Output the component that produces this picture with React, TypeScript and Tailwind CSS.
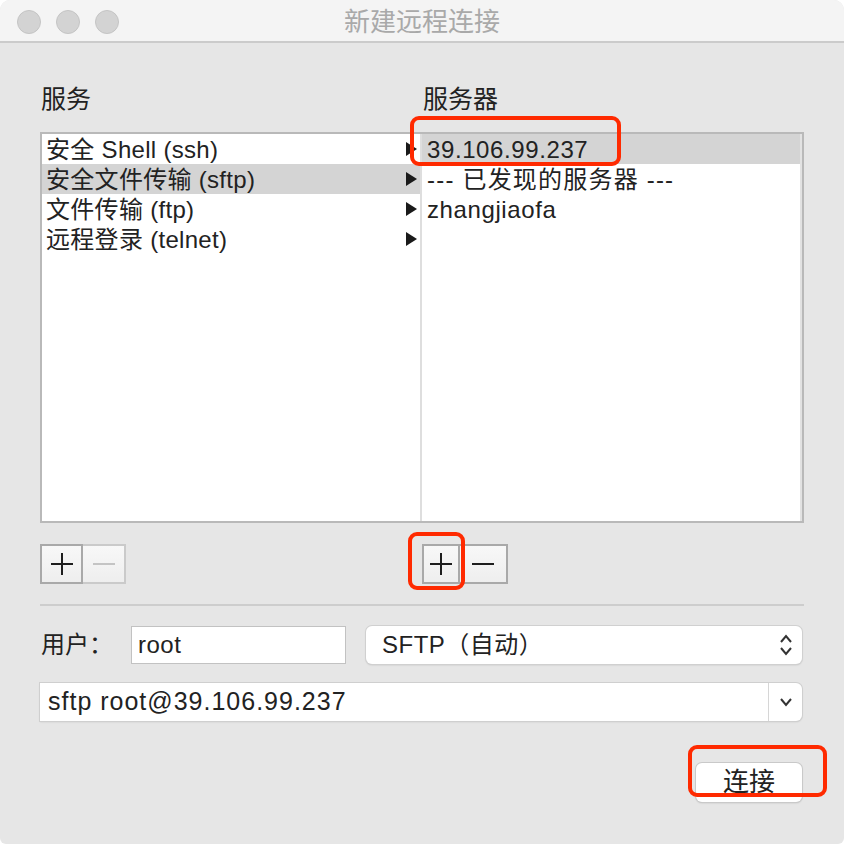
import { ReactNode } from "react";

const SERVICES = ["安全 Shell (ssh)", "安全文件传输 (sftp)", "文件传输 (ftp)", "远程登录 (telnet)"];
const SERVERS = ["39.106.99.237", "--- 已发现的服务器 ---", "zhangjiaofa"];

const font = { fontFamily: '"Liberation Sans", "Noto Sans CJK SC", sans-serif' };

const Plus = ({ color = "#1e1e1e" }: { color?: string }) => (
  <svg width="22" height="22" viewBox="0 0 22 22">
    <path d="M11 0V22M0 11H22" stroke={color} strokeWidth="2" />
  </svg>
);

const Minus = ({ color = "#1e1e1e" }: { color?: string }) => (
  <svg width="22" height="22" viewBox="0 0 22 22">
    <path d="M0 11H22" stroke={color} strokeWidth="2" />
  </svg>
);

const SqButton = ({ children, className }: { children: ReactNode; className: string }) => (
  <div
    className={`h-[40px] flex items-center justify-center border-2 bg-gradient-to-b from-[#f8f8f8] to-[#eeeeee] ${className}`}
  >
    {children}
  </div>
);

const Arrow = () => (
  <svg width="11" height="14" viewBox="0 0 11 14" className="shrink-0">
    <path d="M0 0L11 7L0 14Z" fill="#1a1a1a" />
  </svg>
);

export default function App() {
  return (
    <div className="w-[844px] h-[844px] bg-white text-[#222]" style={font}>
      <div className="relative h-full flex flex-col rounded-t-[10px] rounded-b-[6px] overflow-hidden bg-[#e6e6e6]">
        {/* title bar */}
        <div className="relative h-[43px] shrink-0 flex items-center bg-[#f4f4f4] border-b-2 border-[#cbcbcb]">
          <div className="flex gap-[15px] pl-[17px] pt-[2px]">
            {[0, 1, 2].map((i) => (
              <div key={i} className="w-[24px] h-[24px] rounded-full bg-[#d3d3d3] border border-[#c4c4c4]" />
            ))}
          </div>
          <div className="absolute inset-0 flex items-center justify-center pt-[3px] text-[26px] text-[#a9a9a9]">
            新建远程连接
          </div>
        </div>

        <div className="flex flex-col px-[40px] pt-[41px]">
          {/* labels */}
          <div className="flex h-[32px] items-center text-[25px]">
            <div className="w-[382px] pl-[1px]">服务</div>
            <div className="pl-[1px]">服务器</div>
          </div>

          {/* lists */}
          <div className="mt-[16px] h-[391px] flex border-2 border-[#b9b9b9] bg-white text-[24px]">
            <div className="w-[378px] flex flex-col">
              {SERVICES.map((s, i) => (
                <div
                  key={s}
                  className={`h-[30px] flex items-center justify-between pl-[4px] pr-[3px] ${i === 1 ? "bg-[#d4d4d4]" : ""}`}
                >
                  <span className="leading-[30px] tracking-[0.3px] pt-[1px]">{s}</span>
                  <Arrow />
                </div>
              ))}
            </div>
            <div className="w-[2px] bg-[#dedede]" />
            <div className="flex-1 flex flex-col">
              {SERVERS.map((s, i) => (
                <div key={s} className={`h-[30px] flex items-center pl-[5px] ${i === 0 ? "bg-[#d4d4d4]" : ""}`}>
                  <span className={`leading-[30px] pt-[1px] ${i === 1 ? "tracking-[1.2px]" : "tracking-[0.6px]"}`}>{s}</span>
                </div>
              ))}
            </div>
            <div className="w-[2px] bg-[#e2e2e2]" />
          </div>

          {/* +/- buttons */}
          <div className="mt-[21px] flex">
            <div className="w-[382px] flex">
              <SqButton className="w-[43px] border-[#a9a9a9]">
                <Plus />
              </SqButton>
              <SqButton className="w-[43px] border-[#cacaca] border-l-0">
                <Minus color="#c4c4c4" />
              </SqButton>
            </div>
            <div className="flex">
              <SqButton className="w-[38px] border-[#a9a9a9]">
                <Plus />
              </SqButton>
              <SqButton className="w-[48px] border-[#a9a9a9] border-l-0">
                <Minus />
              </SqButton>
            </div>
          </div>

          <div className="mt-[20px] h-[2px] bg-[#cdcdcd]" />

          {/* user row */}
          <div className="mt-[20px] flex items-center h-[38px] text-[24px]">
            <div className="w-[91px] pl-[1px]">用户：</div>
            <div className="w-[215px] h-[38px] flex items-center bg-white border border-[#c2c2c2] pl-[6px] tracking-[0.5px]">
              root
            </div>
            <div className="ml-[20px] flex-1 mr-[2px] h-[38px] flex items-center justify-between bg-white rounded-[6px] shadow-[0_0_0_1px_#d0d0d0,0_1px_2px_rgba(0,0,0,0.2)] pl-[16px] pr-[9px]">
              <span className="tracking-[0.5px]">SFTP（自动）</span>
              <svg width="14" height="26" viewBox="0 0 14 26">
                <path d="M2 10L7 4L12 10M2 16L7 22L12 16" stroke="#333" strokeWidth="2" fill="none" />
              </svg>
            </div>
          </div>

          {/* command combo */}
          <div className="mt-[19px] mr-[2px] h-[38px] flex bg-white rounded-r-[6px] shadow-[0_0_0_1px_#cfcfcf,0_1px_2px_rgba(0,0,0,0.15)] text-[25px]">
            <div className="flex-1 flex items-center pl-[8px] tracking-[1px]">sftp root@39.106.99.237</div>
            <div className="w-[34px] border-l border-[#d6d6d6] flex items-center justify-center">
              <svg width="14" height="12" viewBox="0 0 14 12">
                <path d="M2 3L7 9L12 3" stroke="#333" strokeWidth="2" fill="none" />
              </svg>
            </div>
          </div>

          {/* connect */}
          <div className="mt-[42px] mr-[2px] flex justify-end">
            <div className="w-[106px] h-[39px] flex items-center justify-center bg-white rounded-[6px] shadow-[0_0_0_1px_#c9c9c9,0_1px_2px_rgba(0,0,0,0.2)] text-[26px]">
              连接
            </div>
          </div>
        </div>

        {/* red annotations */}
        <div className="absolute left-[410px] top-[116px] w-[211px] h-[50px] rounded-[9px] border-4 border-[#ff2a00]" />
        <div className="absolute left-[408px] top-[532px] w-[57px] h-[58px] rounded-[9px] border-4 border-[#ff2a00]" />
        <div className="absolute left-[688px] top-[745px] w-[139px] h-[52px] rounded-[9px] border-4 border-[#ff2a00]" />
      </div>
    </div>
  );
}
